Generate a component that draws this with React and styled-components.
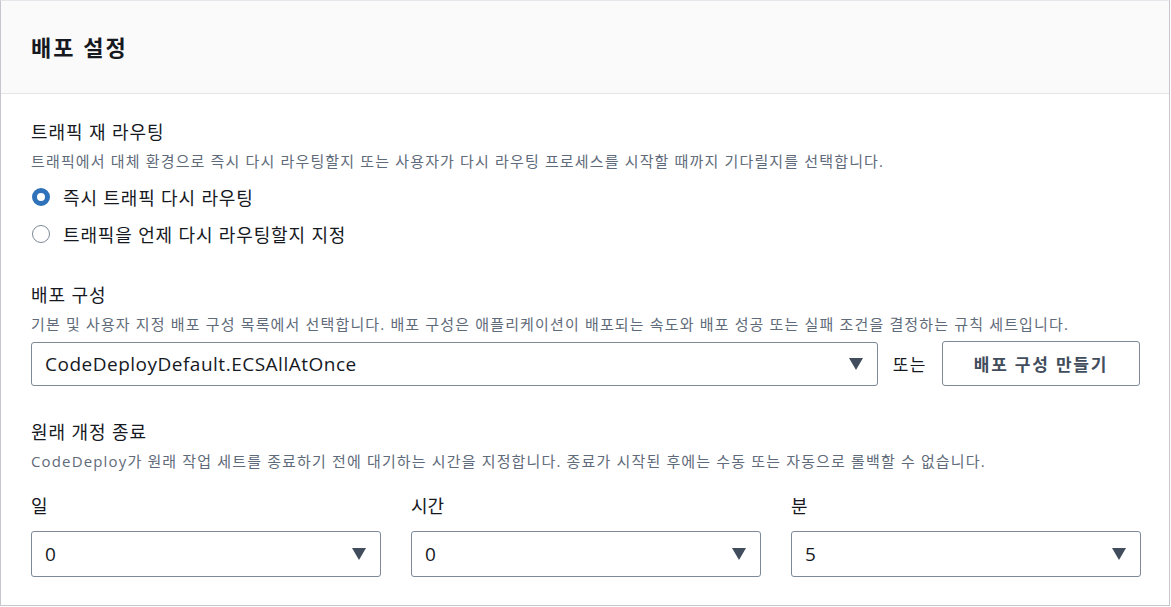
import React from 'react';
import styled, { createGlobalStyle } from 'styled-components';

const GlobalStyle = createGlobalStyle`
  html, body {
    margin: 0;
    padding: 0;
    background: #ffffff;
  }
  body {
    font-family: "Open Sans", "Noto Sans CJK KR", sans-serif;
    color: #16191f;
  }
`;

const Panel = styled.div`
  width: 1170px;
  height: 606px;
  box-sizing: border-box;
  border: 1px solid #c6c6cd;
  border-top-color: #e6e6ea;
  background: #ffffff;
  display: flex;
  flex-direction: column;
`;

const Header = styled.div`
  height: 93px;
  flex-shrink: 0;
  box-sizing: border-box;
  background: #fafafa;
  border-bottom: 1px solid #e6e6ea;
  display: flex;
  align-items: center;
  padding: 0 30px 2px;
`;

const Heading = styled.h2`
  margin: 0;
  font-size: 22px;
  letter-spacing: 2px;
  font-weight: 700;
  color: #16191f;
`;

const Body = styled.div`
  padding: 24px 29px 0 30px;
  display: flex;
  flex-direction: column;
`;

const Field = styled.div`
  display: flex;
  flex-direction: column;
  margin-bottom: ${p => p.gap || 0}px;
`;

const Label = styled.div`
  font-size: 18px;
  letter-spacing: 0.9px;
  line-height: 28px;
  color: #16191f;
`;

const Desc = styled.div`
  font-size: 15px;
  letter-spacing: 1.15px;
  line-height: 30px;
  color: #5f6b7a;
  white-space: nowrap;
`;

const RadioRow = styled.label`
  display: flex;
  align-items: center;
  gap: 13px;
  height: 37px;
  margin-top: ${p => p.top || 0}px;
  font-size: 18px;
  letter-spacing: 0.85px;
  color: #16191f;
`;

const RadioDot = styled.span`
  width: 18px;
  height: 18px;
  box-sizing: border-box;
  border-radius: 50%;
  margin-left: 1px;
  border: ${p => (p.checked ? '5px solid #2f72b9' : '1.5px solid #7d8998')};
  background: #ffffff;
`;

const SelectRow = styled.div`
  display: flex;
  align-items: center;
  gap: 15px;
  margin-top: 2px;
`;

const SelectBox = styled.div`
  flex: ${p => (p.grow ? 1 : 'none')};
  height: ${p => p.h || 44}px;
  box-sizing: border-box;
  border: 1px solid #7d8998;
  border-radius: 3px;
  display: flex;
  align-items: center;
  justify-content: space-between;
  padding: 0 14px 0 13px;
  font-size: 19px;
  letter-spacing: 0.5px;
  color: #16191f;
`;

const Caret = styled.svg`
  width: 14px;
  height: 12px;
  fill: #414d5c;
`;

const Or = styled.span`
  font-size: 17px;
  letter-spacing: 1.5px;
  color: #16191f;
`;

const Button = styled.button`
  width: 198px;
  height: 45px;
  border: 1px solid #7d8998;
  border-radius: 3px;
  background: #ffffff;
  font-family: "Open Sans", "Noto Sans CJK KR", sans-serif;
  font-size: 17px;
  letter-spacing: 1.8px;
  font-weight: 700;
  color: #414d5c;
`;

const Grid = styled.div`
  display: grid;
  grid-template-columns: repeat(3, 350px);
  column-gap: 30px;
  margin-top: 16px;
`;

const Column = styled.div`
  display: flex;
  flex-direction: column;
`;

const SmallLabel = styled.div`
  font-size: 18px;
  line-height: 28px;
  margin-bottom: 11px;
  color: #16191f;
`;

const Arrow = () => (
  <Caret viewBox="0 0 14 12">
    <path d="M0 0 H14 L7 12 Z" />
  </Caret>
);

const Select = ({ value, h, grow }) => (
  <SelectBox h={h} grow={grow}>
    <span>{value}</span>
    <Arrow />
  </SelectBox>
);

export default function App() {
  return (
    <>
      <GlobalStyle />
      <Panel>
        <Header>
          <Heading>배포 설정</Heading>
        </Header>
        <Body>
          <Field gap={29}>
            <Label>트래픽 재 라우팅</Label>
            <Desc>
              트래픽에서 대체 환경으로 즉시 다시 라우팅할지 또는 사용자가 다시 라우팅 프로세스를 시작할 때까지 기다릴지를 선택합니다.
            </Desc>
            <RadioRow top={2}>
              <RadioDot checked />
              즉시 트래픽 다시 라우팅
            </RadioRow>
            <RadioRow>
              <RadioDot />
              트래픽을 언제 다시 라우팅할지 지정
            </RadioRow>
          </Field>
          <Field gap={32}>
            <Label>배포 구성</Label>
            <Desc>
              기본 및 사용자 지정 배포 구성 목록에서 선택합니다. 배포 구성은 애플리케이션이 배포되는 속도와 배포 성공 또는 실패 조건을 결정하는 규칙 세트입니다.
            </Desc>
            <SelectRow>
              <Select value="CodeDeployDefault.ECSAllAtOnce" grow />
              <Or>또는</Or>
              <Button>배포 구성 만들기</Button>
            </SelectRow>
          </Field>
          <Field>
            <Label>원래 개정 종료</Label>
            <Desc>
              CodeDeploy가 원래 작업 세트를 종료하기 전에 대기하는 시간을 지정합니다. 종료가 시작된 후에는 수동 또는 자동으로 롤백할 수 없습니다.
            </Desc>
            <Grid>
              <Column>
                <SmallLabel>일</SmallLabel>
                <Select value="0" h={46} />
              </Column>
              <Column>
                <SmallLabel>시간</SmallLabel>
                <Select value="0" h={46} />
              </Column>
              <Column>
                <SmallLabel>분</SmallLabel>
                <Select value="5" h={46} />
              </Column>
            </Grid>
          </Field>
        </Body>
      </Panel>
    </>
  );
}
